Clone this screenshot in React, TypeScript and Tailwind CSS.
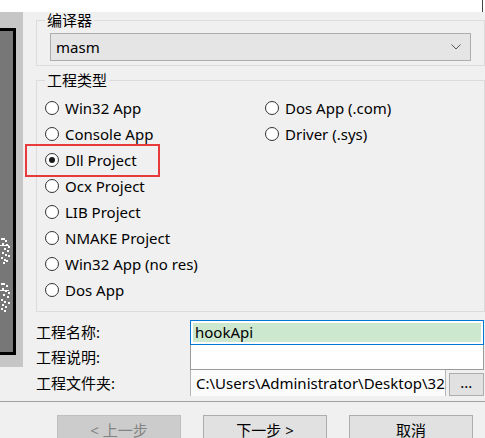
import { ReactNode } from "react";

type RadioProps = {
  label: string;
  checked?: boolean;
};

function Radio({ label, checked }: RadioProps) {
  return (
    <label className="flex h-[26px] items-center gap-[6px] whitespace-nowrap">
      <span className="flex h-[14px] w-[14px] shrink-0 items-center justify-center rounded-full border border-[#333333] bg-white">
        {checked && <span className="h-[6px] w-[6px] rounded-full bg-[#1a1a1a]" />}
      </span>
      <span>{label}</span>
    </label>
  );
}

function FieldLabel({ children, height }: { children: ReactNode; height: string }) {
  return <div className={`flex items-center ${height}`}>{children}</div>;
}

// white dotted marks in the dark preview strip
function StripMarks() {
  const dots: [number, number][] = [
    [1, 207], [3, 207], [5, 209], [2, 212], [6, 213], [8, 215], [4, 217], [7, 219],
    [2, 221], [5, 223], [8, 224], [1, 226], [4, 228], [6, 229], [3, 231],
    [1, 252], [3, 252], [6, 254], [2, 257], [5, 259], [8, 261], [3, 263], [7, 265],
    [1, 268], [4, 270], [8, 271], [2, 273], [5, 275], [1, 277], [4, 279],
  ];
  return (
    <svg width="13" height="321" viewBox="0 0 13 321" className="block">
      {dots.map(([x, y], i) => (
        <rect key={i} x={x} y={y} width="2" height="2" fill="#ffffff" />
      ))}
      <rect x="0" y="214" width="9" height="1" fill="#ffffff" />
      <rect x="0" y="259" width="9" height="1" fill="#ffffff" />
    </svg>
  );
}

export default function App() {
  return (
    <div className="relative h-[438px] w-[485px] overflow-hidden bg-[#f0f0f0] text-[15px] text-black font-['Noto_Sans','Noto_Sans_CJK_SC',sans-serif]">
      <div className="flex h-[12px] justify-end bg-white">
        <span className="mr-[2px] h-full w-px bg-[#444444]" />
      </div>

      <div className="flex h-[389px]">
        <div className="w-[23px] shrink-0">
          <div className="h-[355px] bg-[#c6c6c6] pt-[16px]">
            <div className="h-[327px] w-[16px] border-y-[3px] border-r-[3px] border-black bg-[#777777]">
              <StripMarks />
            </div>
          </div>
        </div>

        <div className="flex-1">
          <fieldset className="ml-[13px] mr-[8px] border border-[#dcdcdc] px-[8px] pb-[4px]">
            <legend className="px-[2px] leading-[16px]">编译器</legend>
            <div className="mx-[5px] mt-[5px] flex h-[28px] items-center justify-between border border-[#adadad] bg-[#e5e5e5] pl-[5px] pr-[9px]">
              <span>masm</span>
              <svg width="10" height="6" viewBox="0 0 10 6" fill="none">
                <polyline points="0.5,0.5 5,5 9.5,0.5" stroke="#555555" strokeWidth="1" />
              </svg>
            </div>
          </fieldset>

          <fieldset className="ml-[13px] mr-[8px] mt-[6px] border border-[#dcdcdc] px-[8px] pb-[8px]">
            <legend className="px-[2px] leading-[16px]">工程类型</legend>
            <div className="grid grid-cols-[220px_1fr] pt-[7px]">
              <div className="flex flex-col">
                <Radio label="Win32 App" />
                <Radio label="Console App" />
                <Radio label="Dll Project" checked />
                <Radio label="Ocx Project" />
                <Radio label="LIB Project" />
                <Radio label="NMAKE Project" />
                <Radio label="Win32 App (no res)" />
                <Radio label="Dos App" />
              </div>
              <div className="flex flex-col">
                <Radio label="Dos App (.com)" />
                <Radio label="Driver (.sys)" />
              </div>
            </div>
          </fieldset>

          <div className="ml-[13px] mr-[9px] mt-[8px] grid grid-cols-[154px_1fr]">
            <div className="flex flex-col">
              <FieldLabel height="h-[25px]">工程名称:</FieldLabel>
              <FieldLabel height="h-[25px]">工程说明:</FieldLabel>
              <FieldLabel height="h-[26px]">工程文件夹:</FieldLabel>
            </div>
            <div className="flex flex-col">
              <div className="h-[25px] border border-[#0078d7] bg-white p-[2px]">
                <div className="flex h-full items-center bg-[#cce8cf] px-[2px]">hookApi</div>
              </div>
              <div className="h-[25px] border-x border-b border-[#9a9a9a] bg-white" />
              <div className="flex h-[26px] gap-[3px]">
                <div className="flex flex-1 items-center overflow-hidden whitespace-nowrap border-x border-[#b5b5b5] bg-[#fbfbfb] pl-[5px]">
                  C:\Users\Administrator\Desktop\32
                </div>
                <div className="mt-[3px] flex h-[23px] w-[35px] items-center justify-center border border-[#adadad] bg-[#e1e1e1] pb-[4px]">
                  ...
                </div>
              </div>
            </div>
          </div>
        </div>
      </div>

      <div className="h-px bg-[#a0a0a0]" />

      <div className="flex gap-[22px] pl-[57px] pt-[13px]">
        <div className="flex h-[30px] w-[124px] items-center justify-center border border-[#bfbfbf] bg-[#cccccc] text-[#838383]">
          &lt; 上一步
        </div>
        <div className="flex h-[30px] w-[124px] items-center justify-center border border-[#adadad] bg-[#e1e1e1]">
          下一步 &gt;
        </div>
        <div className="flex h-[30px] w-[124px] items-center justify-center border border-[#adadad] bg-[#e1e1e1]">
          取消
        </div>
      </div>

      <div className="pointer-events-none absolute left-[25px] top-[144px] h-[33px] w-[135px] border-2 border-[#e8393b]" />
    </div>
  );
}
